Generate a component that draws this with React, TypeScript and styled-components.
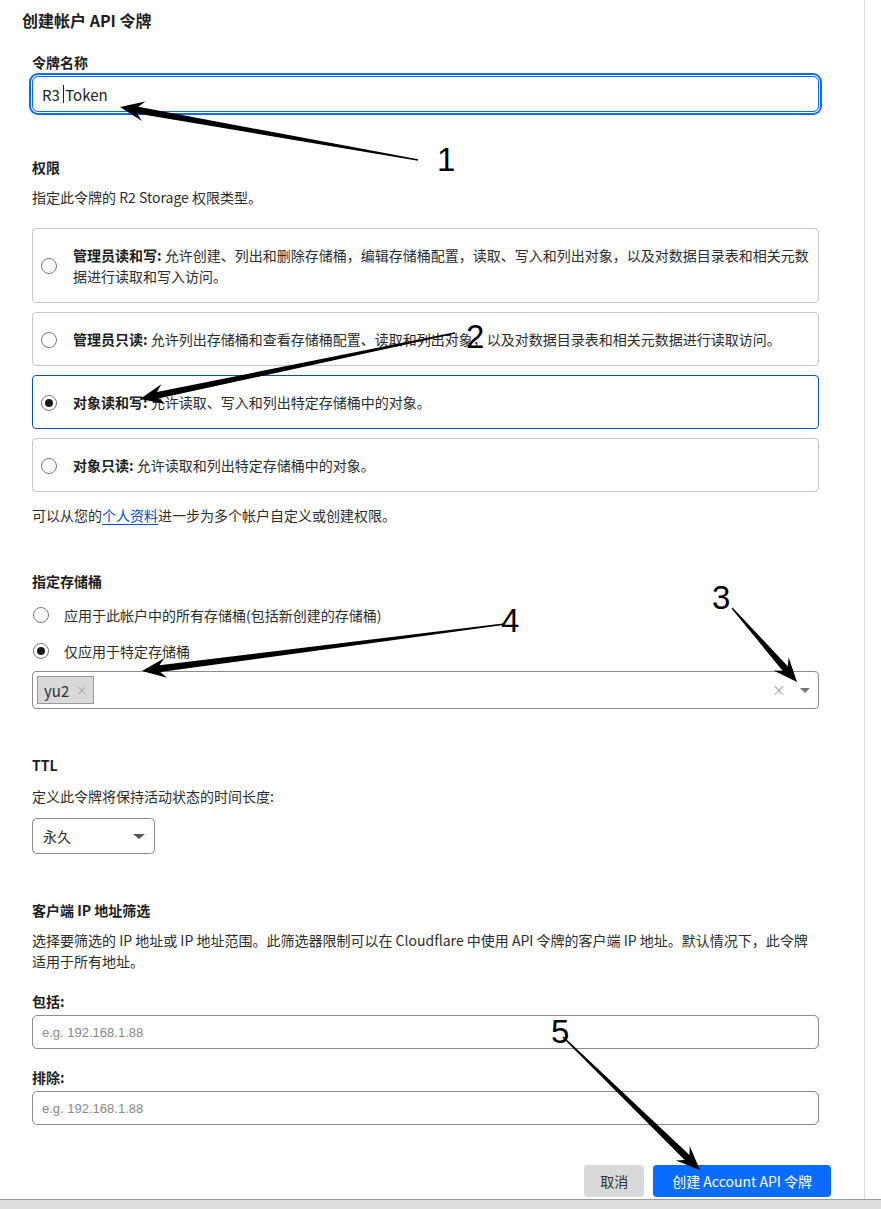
import React from "react";
import styled, { createGlobalStyle } from "styled-components";

const GlobalStyle = createGlobalStyle`
  html, body { margin: 0; padding: 0; background: #fff; }
  body {
    font-family: "Noto Sans CJK SC", "Noto Sans", sans-serif;
    font-size: 14px;
    color: #2d2d2d;
  }
  * { box-sizing: border-box; }
`;

const Screen = styled.div`
  position: relative;
  width: 881px;
  height: 1209px;
  display: flex;
  flex-direction: column;
  overflow: hidden;
`;

const Body = styled.div`
  height: 1199px;
  display: flex;
`;

const Panel = styled.main`
  width: 865px;
  height: 100%;
  border-right: 1px solid #dcdcdc;
  padding: 8px 45px 0 32px;
`;

const ScrollBar = styled.div`
  height: 10px;
  border-top: 1px solid #9b9b9b;
  background: #dedede;
`;

const Title = styled.h1`
  margin: 0 0 20px -10px;
  font-size: 16px;
  line-height: 24px;
  font-weight: 700;
  color: #1d1d1d;
`;

const Heading = styled.h2<{ $gap?: number }>`
  margin: ${(p) => p.$gap ?? 0}px 0 0;
  font-size: 14px;
  line-height: 20px;
  font-weight: 700;
  color: #1d1d1d;
`;

const Text = styled.p<{ $gap?: number; $lh?: number }>`
  margin: ${(p) => p.$gap ?? 0}px 0 0;
  font-size: 14px;
  line-height: ${(p) => p.$lh ?? 20}px;
`;

const Link = styled.a`
  color: #0051c3;
  text-decoration: underline;
  text-underline-offset: 3px;
`;

const FocusInput = styled.div`
  margin-top: 4px;
  height: 36px;
  border: 1px solid #0a6cff;
  border-radius: 6px;
  box-shadow: 0 0 0 1px #fff, 0 0 0 3px #0a6cff;
  display: flex;
  align-items: center;
  padding-left: 9px;
  font-size: 15px;
  color: #222;
`;

const Caret = styled.span`
  display: inline-block;
  width: 1px;
  height: 18px;
  background: #222;
  margin: 0 1px 0 0;
`;

const TextInput = styled.div<{ $gap?: number }>`
  margin-top: ${(p) => p.$gap ?? 4}px;
  height: 34px;
  border: 1px solid #8d8d8d;
  border-radius: 5px;
  display: flex;
  align-items: center;
  padding-left: 9px;
  font-family: "Liberation Sans", Arial, sans-serif;
  font-size: 13px;
  color: #8a8a8a;
`;

const CardList = styled.div`
  margin-top: 21px;
  display: flex;
  flex-direction: column;
  gap: 9px;
`;

const Card = styled.label<{ $selected?: boolean }>`
  display: flex;
  align-items: center;
  gap: 16px;
  padding: 16px 5px 15px 8px;
  border: 1px solid ${(p) => (p.$selected ? "#0b4fb0" : "#c6c6c6")};
  border-radius: 4px;
  line-height: 21px;
`;

const Radio = styled.span<{ $checked?: boolean }>`
  flex: none;
  width: 16px;
  height: 16px;
  border-radius: 50%;
  border: 1px solid #7a7a7a;
  background: #fff;
  display: flex;
  align-items: center;
  justify-content: center;
  &::after {
    content: "";
    width: 8px;
    height: 8px;
    border-radius: 50%;
    background: ${(p) => (p.$checked ? "#1a1a1a" : "transparent")};
  }
`;

const CardText = styled.span`
  b {
    color: #1d1d1d;
    font-weight: 700;
  }
`;

const RadioRow = styled.label<{ $gap: number }>`
  margin-top: ${(p) => p.$gap}px;
  display: flex;
  align-items: center;
  gap: 15px;
  padding-left: 1px;
  line-height: 20px;
`;

const MultiSelect = styled.div`
  margin-top: 10px;
  height: 38px;
  border: 1px solid #8d8d8d;
  border-radius: 4px;
  padding: 4px 8px 4px 4px;
  display: flex;
  align-items: center;
`;

const Chip = styled.span`
  height: 28px;
  display: flex;
  align-items: center;
  padding: 0 6px 0 6px;
  border: 1px solid #9a9a9a;
  background: #d9d9d9;
  font-size: 15px;
  color: #333;
`;

const ChipClose = styled.span`
  margin-left: 7px;
  font-size: 11px;
  color: #999;
`;

const Spacer = styled.span`
  flex: 1;
`;

const ClearX = styled.span`
  font-size: 17px;
  font-weight: 300;
  color: #9a9a9a;
  margin-right: 14px;
  font-family: "DejaVu Sans", sans-serif;
`;

const Triangle = styled.span<{ $color?: string; $w?: number }>`
  width: 0;
  height: 0;
  border-left: ${(p) => (p.$w ?? 10) / 2}px solid transparent;
  border-right: ${(p) => (p.$w ?? 10) / 2}px solid transparent;
  border-top: 5px solid ${(p) => p.$color ?? "#777"};
`;

const Select = styled.div`
  margin-top: 12px;
  width: 123px;
  height: 36px;
  border: 1px solid #8d8d8d;
  border-radius: 5px;
  padding: 0 9px 0 10px;
  display: flex;
  align-items: center;
  justify-content: space-between;
`;

const Actions = styled.div`
  margin: 40px -12px 0 0;
  display: flex;
  justify-content: flex-end;
  gap: 9px;
`;

const Button = styled.button<{ $primary?: boolean }>`
  height: 32px;
  border: none;
  border-radius: 4px;
  padding: 0 ${(p) => (p.$primary ? 19 : 16)}px;
  font-family: inherit;
  font-size: 14px;
  background: ${(p) => (p.$primary ? "#0a6cff" : "#d9d9d9")};
  color: ${(p) => (p.$primary ? "#fff" : "#333")};
`;

const Overlay = styled.svg`
  position: absolute;
  left: 0;
  top: 0;
  pointer-events: none;
`;

type Arrow = { tail: [number, number]; tip: [number, number]; label: string; at: [number, number] };

const arrows: Arrow[] = [
  { tail: [418, 160], tip: [120, 107], label: "1", at: [437, 171] },
  { tail: [455, 333], tip: [140, 399], label: "2", at: [466, 348] },
  { tail: [732, 608], tip: [797, 682], label: "3", at: [712, 609] },
  { tail: [505, 624], tip: [142, 671], label: "4", at: [501, 632] },
  { tail: [563, 1037], tip: [700, 1170], label: "5", at: [551, 1043] },
];

function arrowPoints(tail: [number, number], tip: [number, number]) {
  const [tx, ty] = tail;
  const [px, py] = tip;
  const len = Math.hypot(px - tx, py - ty);
  const ux = (px - tx) / len;
  const uy = (py - ty) / len;
  const nx = -uy;
  const ny = ux;
  const L = 24, W = 10, w0 = 0.7, w1 = 3.4, notch = 6;
  const bx = px - ux * L;
  const by = py - uy * L;
  const pts = [
    [tx + nx * w0, ty + ny * w0],
    [bx + ux * notch + nx * w1, by + uy * notch + ny * w1],
    [bx + nx * W, by + ny * W],
    [px, py],
    [bx - nx * W, by - ny * W],
    [bx + ux * notch - nx * w1, by + uy * notch - ny * w1],
    [tx - nx * w0, ty - ny * w0],
  ];
  return pts.map((p) => p.map((v) => v.toFixed(1)).join(",")).join(" ");
}

const cards = [
  { title: "管理员读和写:", text: "允许创建、列出和删除存储桶，编辑存储桶配置，读取、写入和列出对象，以及对数据目录表和相关元数据进行读取和写入访问。" },
  { title: "管理员只读:", text: "允许列出存储桶和查看存储桶配置、读取和列出对象，以及对数据目录表和相关元数据进行读取访问。" },
  { title: "对象读和写:", text: "允许读取、写入和列出特定存储桶中的对象。", selected: true },
  { title: "对象只读:", text: "允许读取和列出特定存储桶中的对象。" },
];

export default function App() {
  return (
    <Screen>
      <GlobalStyle />
      <Body>
        <Panel>
          <Title>创建帐户 API 令牌</Title>
          <Heading>令牌名称</Heading>
          <FocusInput>
            R3&nbsp;<Caret />Token
          </FocusInput>

          <Heading $gap={45}>权限</Heading>
          <Text $gap={10}>指定此令牌的 R2 Storage 权限类型。</Text>
          <CardList>
            {cards.map((c) => (
              <Card key={c.title} $selected={c.selected}>
                <Radio $checked={c.selected} />
                <CardText>
                  <b>{c.title}</b> {c.text}
                </CardText>
              </Card>
            ))}
          </CardList>
          <Text $gap={13}>
            可以从您的<Link>个人资料</Link>进一步为多个帐户自定义或创建权限。
          </Text>

          <Heading $gap={46}>指定存储桶</Heading>
          <RadioRow $gap={14}>
            <Radio />
            应用于此帐户中的所有存储桶(包括新创建的存储桶)
          </RadioRow>
          <RadioRow $gap={16}>
            <Radio $checked />
            仅应用于特定存储桶
          </RadioRow>
          <MultiSelect>
            <Chip>
              yu2<ChipClose>×</ChipClose>
            </Chip>
            <Spacer />
            <ClearX>×</ClearX>
            <Triangle $w={10} />
          </MultiSelect>

          <Heading $gap={46}>TTL</Heading>
          <Text $gap={11}>定义此令牌将保持活动状态的时间长度:</Text>
          <Select>
            永久
            <Triangle $w={12} $color="#555" />
          </Select>

          <Heading $gap={46}>客户端 IP 地址筛选</Heading>
          <Text $gap={10} $lh={21}>
            选择要筛选的 IP 地址或 IP 地址范围。此筛选器限制可以在 Cloudflare 中使用 API 令牌的客户端 IP 地址。默认情况下，此令牌适用于所有地址。
          </Text>
          <Heading $gap={19}>包括:</Heading>
          <TextInput>e.g. 192.168.1.88</TextInput>
          <Heading $gap={18}>排除:</Heading>
          <TextInput>e.g. 192.168.1.88</TextInput>

          <Actions>
            <Button>取消</Button>
            <Button $primary>创建 Account API 令牌</Button>
          </Actions>
        </Panel>
      </Body>
      <ScrollBar />

      <Overlay width={881} height={1209} viewBox="0 0 881 1209">
        {arrows.map((a) => (
          <g key={a.label}>
            <polygon points={arrowPoints(a.tail, a.tip)} fill="#000" />
            <text x={a.at[0]} y={a.at[1]} fontFamily="Liberation Sans, Arial, sans-serif" fontSize={33} fill="#000">
              {a.label}
            </text>
          </g>
        ))}
      </Overlay>
    </Screen>
  );
}
